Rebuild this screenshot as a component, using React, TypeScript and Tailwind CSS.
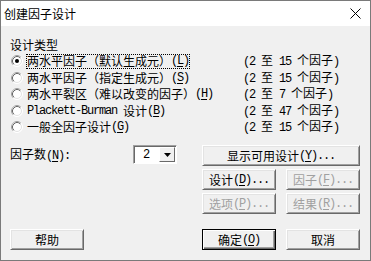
import React from 'react';

// ascii runs get a narrow mono face, like the half-width glyphs of the original dialog font
const MONO = "font-['Liberation_Mono',monospace] text-[12px] tracking-[-1.2px]";

const Mixed: React.FC<{ text: string }> = ({ text }) => {
  const parts = text.match(/[\x00-\x7f]+|[^\x00-\x7f]+/g) || [];
  return (
    <>
      {parts.map((p, i) =>
        /^[\x00-\x7f]/.test(p) ? (
          <span key={i} className={MONO + ' whitespace-pre'}>
            {p}
          </span>
        ) : (
          <span key={i}>{p}</span>
        )
      )}
    </>
  );
};

const Acc: React.FC<{ k: string }> = ({ k }) => (
  <span className={MONO}>
    (<span className="underline underline-offset-[2px]">{k}</span>)
  </span>
);

const Radio: React.FC<{ checked?: boolean }> = ({ checked }) => (
  <svg width="12" height="12" viewBox="0 0 12 12" className="shrink-0">
    <circle cx="6" cy="6" r="5.5" fill="#fff" stroke="#fff" />
    <path d="M2.11 9.89 A5.5 5.5 0 0 1 9.89 2.11" fill="none" stroke="#a0a0a0" />
    <circle cx="6" cy="6" r="4.5" fill="#fff" stroke="#e3e3e3" />
    <path d="M2.82 9.18 A4.5 4.5 0 0 1 9.18 2.82" fill="none" stroke="#696969" />
    {checked && <circle cx="6" cy="6" r="2" fill="#000" />}
  </svg>
);

interface BtnProps {
  children: React.ReactNode;
  disabled?: boolean;
  primary?: boolean;
  wide?: boolean;
}

const Btn: React.FC<BtnProps> = ({ children, disabled, primary, wide }) => (
  <div
    className={
      (wide ? 'w-full ' : 'w-[74px] ') +
      'h-[21px] flex items-center justify-center bg-[#f0f0f0] border leading-none whitespace-nowrap ' +
      (primary
        ? 'border-black shadow-[inset_1px_1px_#fff,inset_-1px_-1px_#696969,inset_-2px_-2px_#a0a0a0] '
        : 'border-t-white border-l-white border-r-[#696969] border-b-[#696969] shadow-[inset_1px_1px_#e3e3e3,inset_-1px_-1px_#a0a0a0] ') +
      (disabled ? 'text-[#a0a0a0]' : 'text-black')
    }
  >
    {children}
  </div>
);

const designs = [
  { label: <>两水平因子（默认生成元）<Acc k="L" /></>, range: '(2 至 15 个因子)', checked: true },
  { label: <>两水平因子（指定生成元）<Acc k="S" /></>, range: '(2 至 15 个因子)' },
  { label: <>两水平裂区（难以改变的因子）<Acc k="H" /></>, range: '(2 至 7 个因子)' },
  { label: <><Mixed text="Plackett-Burman 设计" /><Acc k="B" /></>, range: '(2 至 47 个因子)' },
  { label: <>一般全因子设计<Acc k="G" /></>, range: '(2 至 15 个因子)' },
];

export default function App() {
  return (
    <div className="w-[371px] h-[261px] flex flex-col border border-[#7a7a7a] bg-[#f0f0f0] text-[12px] text-black font-['Noto_Sans_CJK_SC',sans-serif]">
      <div className="h-[25px] shrink-0 bg-white flex items-center justify-between pl-[3px] pr-[9px]">
        <span className="leading-none">创建因子设计</span>
        <svg width="11" height="11" viewBox="0 0 11 11">
          <path d="M0.5 0.5 L10.5 10.5 M10.5 0.5 L0.5 10.5" stroke="#000" strokeWidth="1" />
        </svg>
      </div>

      <div className="flex-1 flex flex-col pl-[9px] pr-[9px] pt-[11px]">
        <div className="h-[16px] leading-[16px]">设计类型</div>

        <div className="flex flex-col">
          {designs.map((d, i) => (
            <div key={i} className="h-[16.5px] flex items-center">
              <div className="w-[233px] flex items-center pl-[1px]">
                <Radio checked={d.checked} />
                <span
                  className={
                    'ml-[3px] h-[15px] flex items-center whitespace-nowrap leading-none border border-dotted ' +
                    (i === 0 ? 'border-black' : 'border-transparent')
                  }
                >
                  {d.label}
                </span>
              </div>
              <span className="whitespace-nowrap leading-none">
                <Mixed text={d.range} />
              </span>
            </div>
          ))}
        </div>

        <div className="mt-[9.5px] flex items-start">
          <div className="w-[192px] h-[19px] flex items-center">
            <span className="w-[123px] leading-none whitespace-nowrap">
              因子数<Acc k="N" />
              <span className={MONO}>:</span>
            </span>
            <div className="w-[44px] h-[19px] flex items-stretch bg-white border border-t-[#a0a0a0] border-l-[#a0a0a0] border-r-white border-b-white shadow-[inset_1px_1px_#696969]">
              <div className={'flex-1 flex items-center pl-[9px] leading-none ' + MONO}>2</div>
              <div className="w-[16px] my-[1px] mr-[1px] flex items-center justify-center bg-[#f0f0f0] border border-t-white border-l-white border-r-[#696969] border-b-[#696969]">
                <svg width="7" height="4" viewBox="0 0 7 4">
                  <path d="M0 0 H7 L3.5 4 Z" fill="#000" />
                </svg>
              </div>
            </div>
          </div>

          <div className="w-[158px] flex flex-col gap-[3px]">
            <Btn wide>
              显示可用设计<Acc k="Y" />
              <span className={MONO}>...</span>
            </Btn>
            <div className="flex gap-[10px]">
              <Btn>
                设计<Acc k="D" />
                <span className={MONO}>...</span>
              </Btn>
              <Btn disabled>
                因子<Acc k="F" />
                <span className={MONO}>...</span>
              </Btn>
            </div>
            <div className="flex gap-[10px]">
              <Btn disabled>
                选项<Acc k="P" />
                <span className={MONO}>...</span>
              </Btn>
              <Btn disabled>
                结果<Acc k="R" />
                <span className={MONO}>...</span>
              </Btn>
            </div>
          </div>
        </div>

        <div className="mt-[15px] flex">
          <div className="w-[192px]">
            <Btn>帮助</Btn>
          </div>
          <div className="flex gap-[10px]">
            <Btn primary>
              确定<Acc k="O" />
            </Btn>
            <Btn>取消</Btn>
          </div>
        </div>
      </div>
    </div>
  );
}
